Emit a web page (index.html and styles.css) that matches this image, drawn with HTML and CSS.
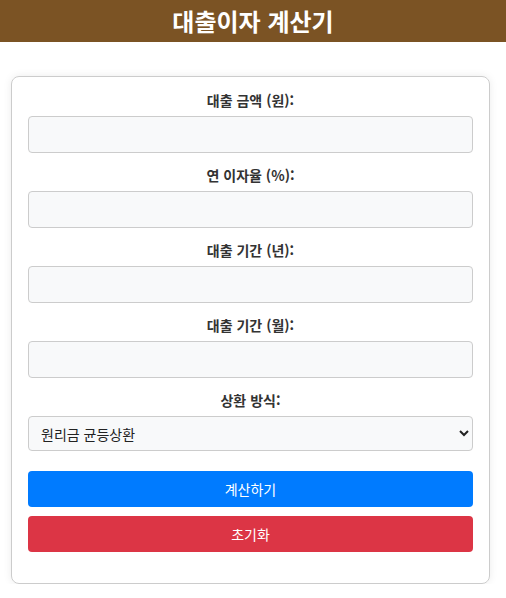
FILE: index.html
```html
<!DOCTYPE html>
<html lang="ko">
<head>
<meta charset="utf-8">
<title>대출이자 계산기</title>
<link rel="stylesheet" href="styles.css">
</head>
<body>
<header class="top">
  <h1 class="title">대출이자 계산기</h1>
</header>
<main class="card">
  <div class="group">
    <label class="label" for="amount">대출 금액 (원):</label>
    <input class="field" id="amount" type="number">
  </div>
  <div class="group">
    <label class="label" for="rate">연 이자율 (%):</label>
    <input class="field" id="rate" type="number">
  </div>
  <div class="group">
    <label class="label" for="years">대출 기간 (년):</label>
    <input class="field" id="years" type="number">
  </div>
  <div class="group">
    <label class="label" for="months">대출 기간 (월):</label>
    <input class="field" id="months" type="number">
  </div>
  <div class="group">
    <label class="label" for="method">상환 방식:</label>
    <select class="field select" id="method">
      <option>원리금 균등상환</option>
      <option>원금 균등상환</option>
      <option>만기 일시상환</option>
    </select>
  </div>
  <div class="actions">
    <button class="btn btn-blue" type="button">계산하기</button>
    <button class="btn btn-red" type="button">초기화</button>
  </div>
</main>
</body>
</html>
```
FILE: styles.css
```css
html, body {
  margin: 0;
  padding: 0;
  background: #ffffff;
}
body {
  font-family: "Noto Sans CJK KR", "Noto Sans", sans-serif;
  color: #333333;
}
.top {
  background: #7b5324;
  height: 42px;
  display: flex;
  align-items: center;
  justify-content: center;
}
.title {
  margin: 0;
  color: #ffffff;
  font-size: 24px;
  font-weight: 700;
  line-height: 42px;
}
.card {
  display: block;
  box-sizing: border-box;
  width: 479px;
  margin: 34px 0 0 11px;
  padding: 13px 16px 31px;
  border: 1px solid #cccccc;
  border-radius: 8px;
  box-shadow: 0 0 8px rgba(0, 0, 0, 0.08);
}
.group {
  display: flex;
  flex-direction: column;
  margin-bottom: 12px;
}
.label {
  display: block;
  text-align: center;
  font-size: 14px;
  font-weight: 700;
  line-height: 20px;
  margin-bottom: 6px;
  color: #333333;
}
.field {
  box-sizing: border-box;
  width: 100%;
  height: 37px;
  margin: 0;
  padding: 0 10px;
  background: #f8f9fa;
  border: 1px solid #cccccc;
  border-radius: 4px;
  font-family: inherit;
  font-size: 14px;
}
.select {
  height: 35px;
  padding: 0 8px;
  color: #222222;
}
.actions {
  display: flex;
  flex-direction: column;
  gap: 9px;
  margin-top: 20px;
}
.btn {
  height: 36px;
  border: none;
  border-radius: 4px;
  color: #ffffff;
  font-family: inherit;
  font-size: 14px;
  cursor: pointer;
}
.btn-blue {
  background: #007bff;
}
.btn-red {
  background: #dc3545;
}
```
